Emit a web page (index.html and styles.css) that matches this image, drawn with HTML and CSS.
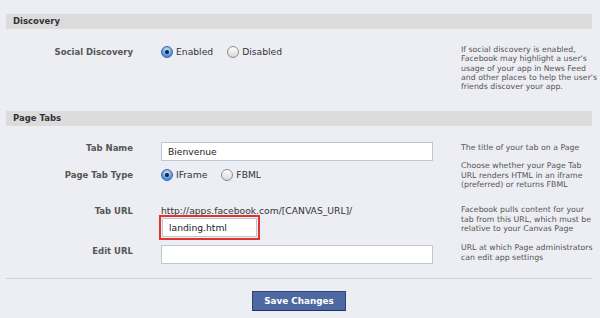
FILE: index.html
```html
<!DOCTYPE html>
<html lang="en">
<head>
  <meta charset="UTF-8" />
  <title>App Settings</title>
  <link rel="stylesheet" href="styles.css">
</head>
<body>
  <div class="page">
    <div class="section-head">Discovery</div>

    <div class="row row-discovery">
      <div class="label">Social Discovery</div>
      <div class="field radios">
        <span class="radio"><span class="dot on"></span>Enabled</span>
        <span class="radio"><span class="dot"></span>Disabled</span>
      </div>
      <div class="desc">If social discovery is enabled,<br>Facebook may highlight a user's<br>usage of your app in News Feed<br>and other places to help the user's<br>friends discover your app.</div>
    </div>

    <div class="section-head">Page Tabs</div>

    <div class="row row-name">
      <div class="label">Tab Name</div>
      <div class="field"><input class="text-input" type="text" value="Bienvenue"></div>
      <div class="desc">The title of your tab on a Page</div>
    </div>

    <div class="row row-type">
      <div class="label">Page Tab Type</div>
      <div class="field radios">
        <span class="radio"><span class="dot on"></span>IFrame</span>
        <span class="radio"><span class="dot"></span>FBML</span>
      </div>
      <div class="desc">Choose whether your Page Tab<br>URL renders HTML in an iframe<br>(preferred) or returns FBML</div>
    </div>

    <div class="row row-url">
      <div class="label">Tab URL</div>
      <div class="field">
        <div class="url-prefix">http://apps.facebook.com/[CANVAS_URL]/</div>
        <div class="highlight"><input class="text-input small" type="text" value="landing.html"></div>
      </div>
      <div class="desc">Facebook pulls content for your<br>tab from this URL, which must be<br>relative to your Canvas Page</div>
    </div>

    <div class="row row-edit">
      <div class="label">Edit URL</div>
      <div class="field"><input class="text-input" type="text" value=""></div>
      <div class="desc">URL at which Page administrators<br>can edit app settings</div>
    </div>

    <div class="divider"></div>

    <div class="actions">
      <button class="btn" type="button">Save Changes</button>
    </div>
  </div>
</body>
</html>
```

FILE: styles.css
```css
body {
  margin: 0;
  background: #edeef3;
  font-family: "DejaVu Sans", Verdana, sans-serif;
  font-size: 8.5px;
  color: #333;
}

.page {
  padding: 14px 8px 0 6px;
}

.section-head {
  background: #dcdcdc;
  height: 15px;
  line-height: 15px;
  padding-left: 7px;
  font-weight: bold;
  color: #333;
}

.row {
  display: grid;
  grid-template-columns: 127px 272px 131px;
  column-gap: 28px;
  align-items: start;
}

.label {
  text-align: right;
  font-weight: bold;
  color: #555;
  line-height: 12px;
}

.desc {
  color: #555;
  font-size: 7.8px;
  line-height: 9.3px;
  white-space: nowrap;
}

.radios {
  display: flex;
  gap: 14px;
  line-height: 12px;
  font-size: 9.2px;
  color: #333;
}

.radio {
  display: flex;
  align-items: center;
  gap: 3px;
}

.dot {
  display: inline-block;
  width: 10px;
  height: 10px;
  border-radius: 50%;
  border: 1px solid #8c8c8c;
  background: linear-gradient(#ffffff, #d8d8d8);
  position: relative;
}

.dot.on {
  border-color: #3a66a8;
  background: radial-gradient(circle at 50% 30%, #cfe3f8, #5c9ae0 60%, #3b76c4);
}

.dot.on::after {
  content: "";
  position: absolute;
  left: 3px;
  top: 3px;
  width: 4px;
  height: 4px;
  border-radius: 50%;
  background: #15233a;
}

.text-input {
  box-sizing: border-box;
  width: 272px;
  height: 19px;
  border: 1px solid #bdc7d8;
  background: #fff;
  font-family: inherit;
  font-size: 9.2px;
  color: #222;
  padding: 0 6px;
  margin: 0;
  display: block;
}

.text-input.small {
  width: 95px;
}

.row-discovery {
  margin-top: 16px;
  margin-bottom: 20px;
}

.row-discovery .label,
.row-discovery .radios {
  padding-top: 1px;
}

.row-name {
  margin-top: 16px;
}

.row-name .desc {
  padding-top: 1px;
}

.row-type .label,
.row-type .radios {
  padding-top: 8px;
}

.row-url {
  margin-top: 16px;
}

.url-prefix {
  line-height: 12px;
  font-size: 9.2px;
  color: #333;
}

.highlight {
  display: inline-block;
  margin-left: -2px;
  margin-top: -2px;
  border: 2px solid #e2342b;
  padding: 1px;
}

.row-edit {
  margin-top: 3px;
}

.row-edit .label,
.row-edit .field {
  padding-top: 2px;
}

.divider {
  border-top: 1px solid #cfcfd4;
  margin-top: 14px;
}

.actions {
  display: flex;
  justify-content: center;
  padding-top: 12px;
}

.btn {
  width: 94px;
  height: 20px;
  background: #4e68a2;
  border: 1px solid #2c4478;
  border-bottom-color: #1d3366;
  color: #fff;
  font-family: inherit;
  font-weight: bold;
  font-size: 8.8px;
  padding: 0;
}
```
